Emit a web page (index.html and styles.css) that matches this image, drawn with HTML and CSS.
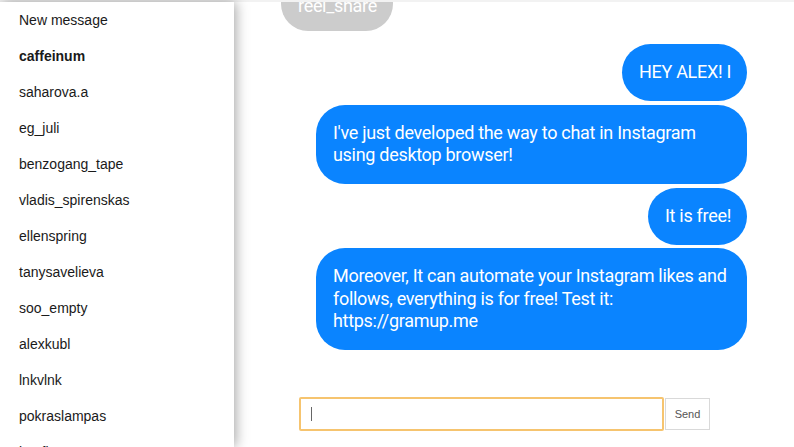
FILE: index.html
```html
<!DOCTYPE html>
<html>
<head>
<meta charset="utf-8">
<link rel="stylesheet" href="styles.css">
</head>
<body>
<div class="app">
  <aside class="sidebar">
    <ul class="threads">
      <li class="thread">New message</li>
      <li class="thread active">caffeinum</li>
      <li class="thread">saharova.a</li>
      <li class="thread">eg_juli</li>
      <li class="thread">benzogang_tape</li>
      <li class="thread">vladis_spirenskas</li>
      <li class="thread">ellenspring</li>
      <li class="thread">tanysavelieva</li>
      <li class="thread">soo_empty</li>
      <li class="thread">alexkubl</li>
      <li class="thread">lnkvlnk</li>
      <li class="thread">pokraslampas</li>
      <li class="thread">kn_flower</li>
      <li class="thread">marinka</li>
    </ul>
  </aside>
  <main class="chat">
    <div class="messages">
      <div class="bubble incoming">reel_share</div>
      <div class="bubble outgoing">HEY ALEX! I</div>
      <div class="bubble outgoing">I've just developed the way to chat in Instagram using desktop browser!</div>
      <div class="bubble outgoing">It is free!</div>
      <div class="bubble outgoing">Moreover, It can automate your Instagram likes and follows, everything is for free! Test it: https://gramup.me</div>
    </div>
    <form class="composer">
      <div class="input"><span class="caret"></span></div>
      <button class="send" type="button">Send</button>
    </form>
  </main>
</div>
</body>
</html>
```
FILE: styles.css
```css
html, body {
  margin: 0;
  padding: 0;
  height: 100%;
  background: #fff;
  overflow: hidden;
}
body {
  font-family: "Liberation Sans", Arial, sans-serif;
}
.app {
  display: flex;
  height: 447px;
  border-top: 2px solid #f2f2f2;
  box-sizing: border-box;
}
.sidebar {
  width: 234px;
  flex: none;
  background: #fff;
  box-shadow: 2px 0 12px rgba(0, 0, 0, 0.35);
  position: relative;
  z-index: 1;
  overflow: hidden;
}
.threads {
  list-style: none;
  margin: 0;
  padding: 9px 0 0 19px;
}
.thread {
  height: 36px;
  line-height: 18px;
  font-size: 14px;
  color: #1a1a1a;
}
.thread.active {
  font-weight: bold;
}
.chat {
  flex: 1;
  display: flex;
  flex-direction: column;
  min-width: 0;
}
.messages {
  height: 348px;
  overflow: hidden;
  display: flex;
  flex-direction: column;
  justify-content: flex-end;
  align-items: flex-end;
  gap: 3.5px;
  padding-right: 47px;
}
.bubble {
  font-family: "Roboto", "Liberation Sans", sans-serif;
  font-size: 18px;
  line-height: 22.5px;
  letter-spacing: -0.3px;
  color: #fff;
  border-radius: 29px;
  padding: 17.25px 16px 17.25px 17px;
  max-width: 398px;
  flex: none;
}
.outgoing {
  background: #0a84ff;
}
.incoming {
  align-self: flex-start;
  margin-left: 47px;
  margin-bottom: 9.5px;
  padding-bottom: 14px;
  background: #cccccc;
}
.composer {
  display: flex;
  align-items: center;
  margin: 47px 0 0 65px;
}
.input {
  height: 30px;
  border: 2px solid #f6c46f;
  border-radius: 2px;
  background: #fff;
  display: flex;
  align-items: center;
  padding-left: 10px;
  box-sizing: content-box;
  width: 351px;
}
.caret {
  width: 1px;
  height: 14px;
  background: #666;
}
.send {
  margin-left: 1px;
  height: 32px;
  width: 45px;
  border: 1px solid #d9d9d9;
  background: #fff;
  font-family: "Liberation Sans", Arial, sans-serif;
  font-size: 11px;
  color: #555;
  padding: 0;
}
```
